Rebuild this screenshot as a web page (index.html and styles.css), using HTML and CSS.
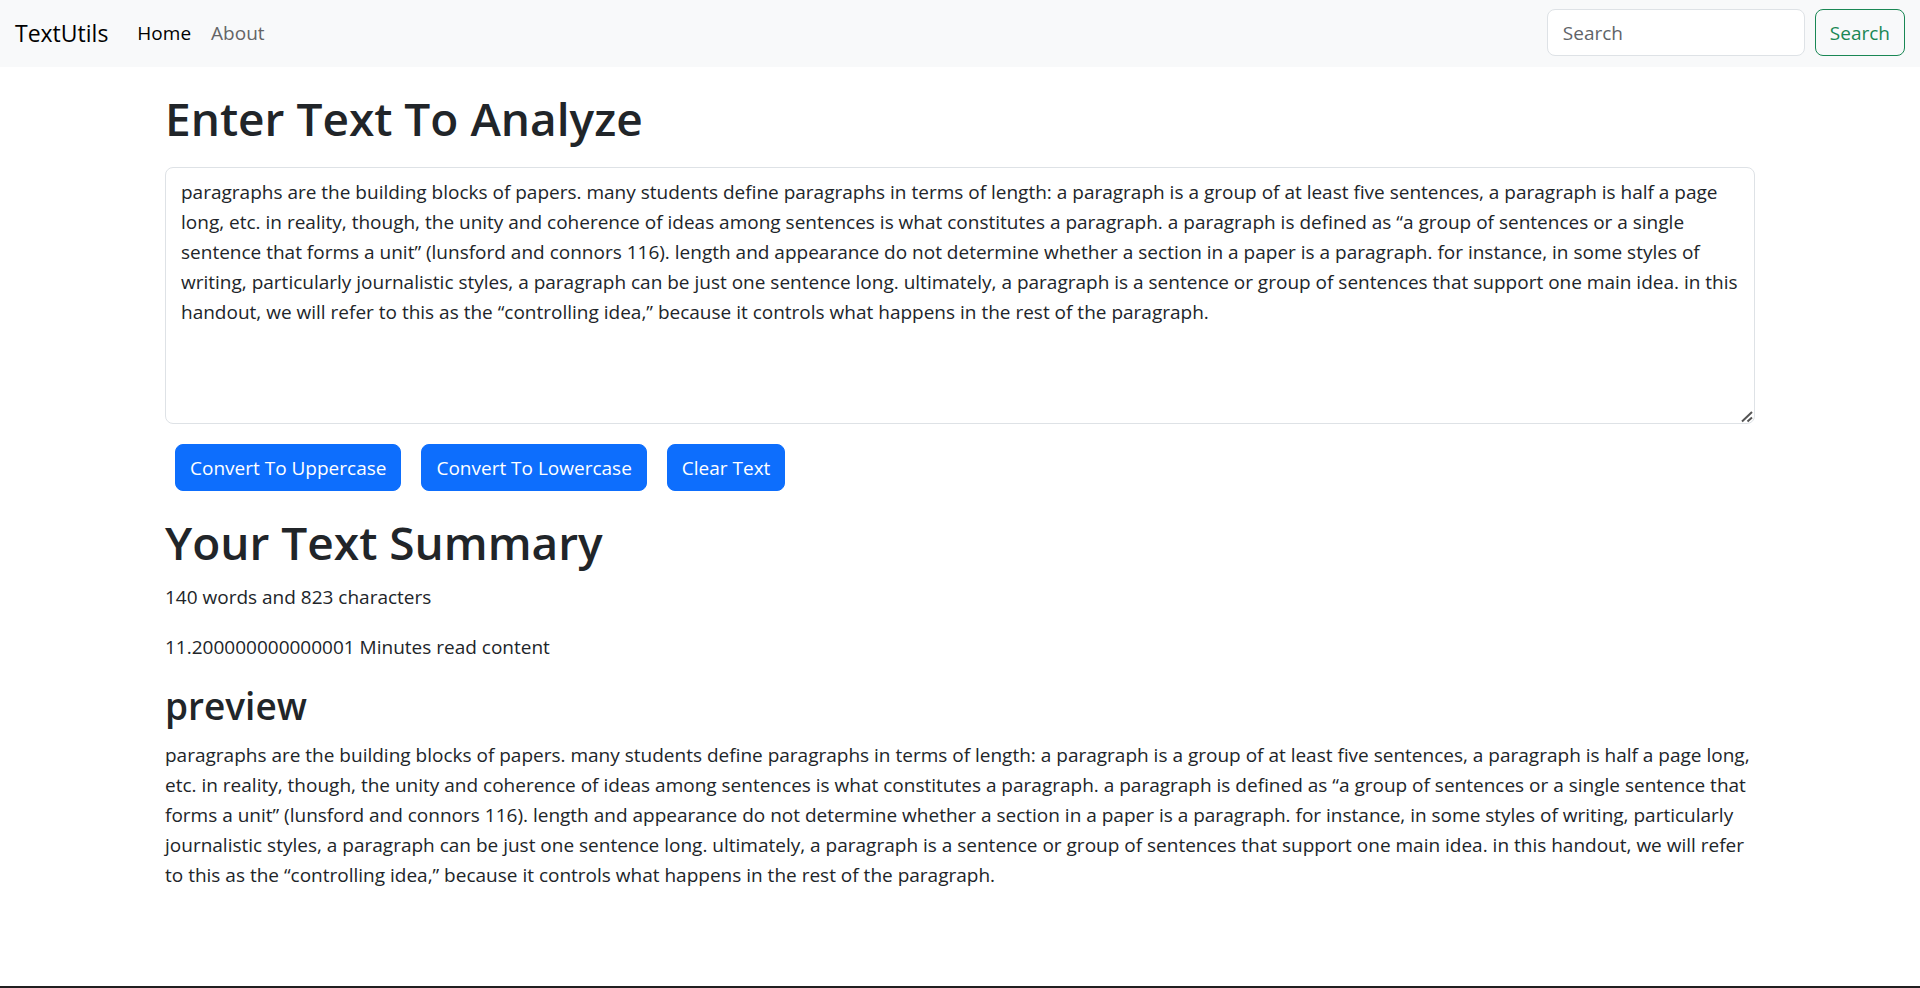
FILE: index.html
```
<!DOCTYPE html>
<html lang="en">
<head>
<meta charset="utf-8">
<meta name="viewport" content="width=device-width, initial-scale=1">
<title>TextUtils</title>
<link rel="stylesheet" href="styles.css">
</head>
<body>
<nav class="navbar">
  <a class="brand" href="#">TextUtils</a>
  <ul class="nav-list">
    <li><a class="nav-link active" href="#" aria-current="page">Home</a></li>
    <li><a class="nav-link" href="#">About</a></li>
  </ul>
  <form class="search" role="search">
    <input class="control search-input" type="search" placeholder="Search" aria-label="Search">
    <button class="btn btn-outline" type="button">Search</button>
  </form>
</nav>
<main class="container">
  <section>
    <h1><label for="text">Enter Text To Analyze</label></h1>
    <textarea class="control editor" id="text" spellcheck="false">paragraphs are the building blocks of papers. many students define paragraphs in terms of length: a paragraph is a group of at least five sentences, a paragraph is half a page long, etc. in reality, though, the unity and coherence of ideas among sentences is what constitutes a paragraph. a paragraph is defined as “a group of sentences or a single sentence that forms a unit” (lunsford and connors 116). length and appearance do not determine whether a section in a paper is a paragraph. for instance, in some styles of writing, particularly journalistic styles, a paragraph can be just one sentence long. ultimately, a paragraph is a sentence or group of sentences that support one main idea. in this handout, we will refer to this as the “controlling idea,” because it controls what happens in the rest of the paragraph.</textarea>
    <div class="actions">
      <button class="btn btn-primary" type="button">Convert To Uppercase</button>
      <button class="btn btn-primary" type="button">Convert To Lowercase</button>
      <button class="btn btn-primary" type="button">Clear Text</button>
    </div>
  </section>
  <section>
    <h1>Your Text Summary</h1>
    <p>140 words and 823 characters</p>
    <p>11.200000000000001 Minutes read content</p>
    <h2>preview</h2>
    <p>paragraphs are the building blocks of papers. many students define paragraphs in terms of length: a paragraph is a group of at least five sentences, a paragraph is half a page long, etc. in reality, though, the unity and coherence of ideas among sentences is what constitutes a paragraph. a paragraph is defined as “a group of sentences or a single sentence that forms a unit” (lunsford and connors 116). length and appearance do not determine whether a section in a paper is a paragraph. for instance, in some styles of writing, particularly journalistic styles, a paragraph can be just one sentence long. ultimately, a paragraph is a sentence or group of sentences that support one main idea. in this handout, we will refer to this as the “controlling idea,” because it controls what happens in the rest of the paragraph.</p>
  </section>
</main>
</body>
</html>
```
FILE: styles.css
```
*, *::before, *::after { box-sizing: border-box; }
body {
  margin: 0;
  min-height: 100vh;
  font-family: "Segoe UI", "Open Sans", "Noto Sans", sans-serif;
  font-size: 19px;
  line-height: 30px;
  color: #212529;
  background: #fff;
  border-bottom: 2px solid #211f20;
}
.navbar {
  display: flex;
  align-items: center;
  padding: 9px 15px 11px;
  background: #f8f9fa;
}
.brand {
  margin-right: 19px;
  font-size: 23px;
  line-height: 38px;
  color: #000;
  text-decoration: none;
}
.nav-list {
  display: flex;
  flex: 1;
  margin: 0;
  padding: 0;
  list-style: none;
}
.nav-link {
  display: block;
  padding: 8px 10px;
  color: #646566;
  text-decoration: none;
}
.nav-link.active { color: #000; }
.search { display: flex; gap: 10px; }
.control {
  font: inherit;
  color: #212529;
  background: #fff;
  border: 1px solid #dee2e6;
  border-radius: 8px;
  padding: 8px 15px;
}
.control::placeholder { color: #5f6468; opacity: 1; }
.search-input { width: 258px; height: 47px; appearance: none; }
.btn {
  height: 47px;
  padding: 8px 14px;
  font: inherit;
  border: 1px solid;
  border-radius: 8px;
  cursor: pointer;
}
.btn-outline { color: #198754; background: transparent; border-color: #198754; }
.btn-primary { color: #fff; background: #0d6efd; border-color: #0d6efd; }
.container {
  max-width: 1650px;
  margin: 0 auto;
  padding: 21px 30px;
}
h1, h2 { margin: 0 0 10px; font-weight: 600; }
h1 { font-size: 46px; line-height: 60px; }
h2 { font-size: 37px; line-height: 48px; }
p { margin: 0 0 20px; }
.editor {
  display: block;
  width: 100%;
  height: 257px;
  margin-top: 19px;
  padding: 9px 15px;
  resize: vertical;
}
.editor::-webkit-resizer {
  background: url("data:image/svg+xml,%3Csvg xmlns='http://www.w3.org/2000/svg' width='15' height='15'%3E%3Cpath d='M3 13.5L13 4M8.5 13.5L13 9.5' stroke='%23555' stroke-width='2'/%3E%3C/svg%3E") no-repeat right bottom;
}
.actions { display: flex; gap: 20px; margin: 20px 10px 21px; }
```
